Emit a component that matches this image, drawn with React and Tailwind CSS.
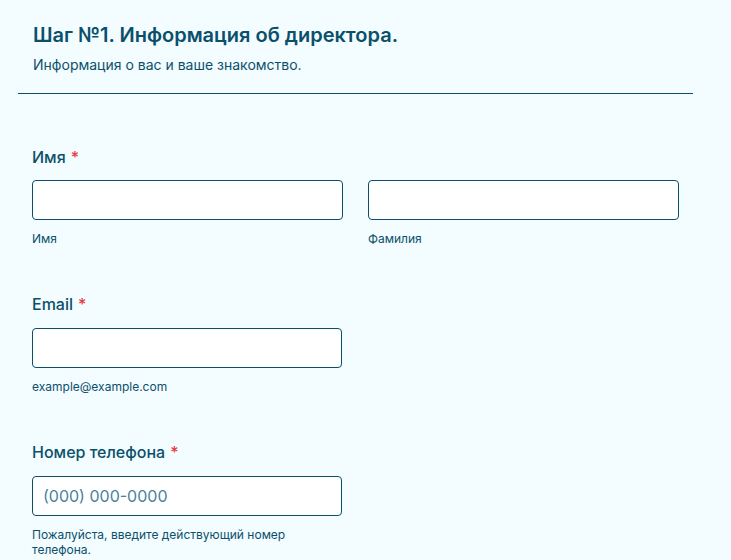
import React from 'react';

const Req = () => <span className="text-[#e63946] ml-[5px]">*</span>;

const App = () => {
  return (
    <div className="min-h-screen bg-[#f3fcff] font-['Inter',sans-serif] text-[#0b506b]">
      <div className="ml-[18px] w-[675px]">
        <div className="px-[15px] pt-[21px] pb-[18px] border-b border-[#0b506b]">
          <h1 className="text-[20px] leading-[28px] font-semibold">Шаг №1. Информация об директора.</h1>
          <p className="mt-[6px] text-[14px] leading-[20px]">Информация о вас и ваше знакомство.</p>
        </div>

        <div className="px-[14px] pt-[51px]">
          <div>
            <label className="block text-[16px] leading-[24px] font-medium">
              Имя<Req />
            </label>
            <div className="mt-[11px] grid grid-cols-2 gap-[25px]">
              <div>
                <input type="text" className="block w-full h-[40px] bg-white border border-[#0b506b] rounded-[4px] px-[10px] outline-none" />
                <div className="mt-[11px] text-[12px] leading-[16px]">Имя</div>
              </div>
              <div>
                <input type="text" className="block w-full h-[40px] bg-white border border-[#0b506b] rounded-[4px] px-[10px] outline-none" />
                <div className="mt-[11px] text-[12px] leading-[16px]">Фамилия</div>
              </div>
            </div>
          </div>

          <div className="mt-[45px]">
            <label className="block text-[16px] leading-[24px] font-medium">
              Email<Req />
            </label>
            <input type="email" className="mt-[12px] block w-[310px] h-[40px] bg-white border border-[#0b506b] rounded-[4px] px-[10px] outline-none" />
            <div className="mt-[11px] text-[12px] leading-[16px]">example@example.com</div>
          </div>

          <div className="mt-[45px]">
            <label className="block text-[16px] leading-[24px] font-medium">
              Номер телефона<Req />
            </label>
            <input
              type="tel"
              placeholder="(000) 000-0000"
              className="mt-[12px] block w-[310px] h-[40px] bg-white border border-[#0b506b] rounded-[4px] px-[10px] text-[16px] outline-none placeholder:text-[#4b8298]"
            />
            <div className="mt-[11px] w-[280px] text-[12px] leading-[15px]">
              Пожалуйста, введите действующий номер телефона.
            </div>
          </div>
        </div>
      </div>
    </div>
  );
};

export default App;
